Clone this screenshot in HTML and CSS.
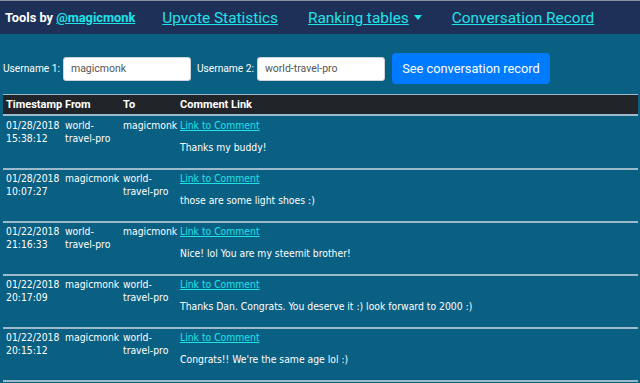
FILE: index.html
```html
<!DOCTYPE html>
<html lang="en">
<head>
  <meta charset="UTF-8">
  <meta name="viewport" content="width=device-width, initial-scale=1.0">
  <title>Conversation Record</title>
  <link rel="stylesheet" href="styles.css">
</head>
<body>
  <nav class="navbar">
    <span class="brand">Tools by <a href="#">@magicmonk</a></span>
    <a class="nav-link" href="#">Upvote Statistics</a>
    <a class="nav-link dropdown-toggle" href="#">Ranking tables</a>
    <a class="nav-link" href="#">Conversation Record</a>
  </nav>

  <form class="controls">
    <label for="user1">Username 1:</label>
    <input type="text" id="user1" value="magicmonk">
    <label for="user2">Username 2:</label>
    <input type="text" id="user2" value="world-travel-pro">
    <button type="button">See conversation record</button>
  </form>

  <div class="table-wrap">
    <table>
      <colgroup>
        <col class="col-time">
        <col class="col-from">
        <col class="col-to">
        <col>
      </colgroup>
      <thead>
        <tr>
          <th>Timestamp</th>
          <th>From</th>
          <th>To</th>
          <th>Comment Link</th>
        </tr>
      </thead>
      <tbody>
        <tr>
          <td>01/28/2018 15:38:12</td>
          <td>world-travel-pro</td>
          <td>magicmonk</td>
          <td><a href="#">Link to Comment</a><p>Thanks my buddy!</p></td>
        </tr>
        <tr>
          <td>01/28/2018 10:07:27</td>
          <td>magicmonk</td>
          <td>world-travel-pro</td>
          <td><a href="#">Link to Comment</a><p>those are some light shoes :)</p></td>
        </tr>
        <tr>
          <td>01/22/2018 21:16:33</td>
          <td>world-travel-pro</td>
          <td>magicmonk</td>
          <td><a href="#">Link to Comment</a><p>Nice! lol You are my steemit brother!</p></td>
        </tr>
        <tr>
          <td>01/22/2018 20:17:09</td>
          <td>magicmonk</td>
          <td>world-travel-pro</td>
          <td><a href="#">Link to Comment</a><p>Thanks Dan. Congrats. You deserve it :) look forward to 2000 :)</p></td>
        </tr>
        <tr>
          <td>01/22/2018 20:15:12</td>
          <td>magicmonk</td>
          <td>world-travel-pro</td>
          <td><a href="#">Link to Comment</a><p>Congrats!! We're the same age lol :)</p></td>
        </tr>
      </tbody>
    </table>
  </div>
</body>
</html>
```

FILE: styles.css
```css
body {
  margin: 0;
  padding: 0;
  background-color: #0a6083;
  color: #fff;
  font-family: Roboto, "Noto Sans", sans-serif;
}
a {
  color: #1fe3e8;
}

/* Navbar */
.navbar {
  display: flex;
  align-items: center;
  height: 33px;
  border-top: 1px solid #8a8f99;
  background-color: #1d3158;
  padding-left: 5px;
  white-space: nowrap;
}
.brand {
  font-size: 12.8px;
  font-weight: bold;
  margin-right: 12px;
}
.nav-link {
  font-size: 15.4px;
  padding: 0 15px;
}
.dropdown-toggle::after {
  content: "";
  display: inline-block;
  margin-left: 5px;
  vertical-align: 3px;
  border-top: 5px solid #1fe3e8;
  border-left: 4px solid transparent;
  border-right: 4px solid transparent;
}

/* Form */
.controls {
  display: flex;
  align-items: center;
  padding: 19px 3px 10px;
  font-size: 10.2px;
  white-space: nowrap;
}
.controls label {
  margin-right: 3px;
}
.controls input {
  width: 128px;
  height: 24px;
  box-sizing: border-box;
  border: 1px solid #ced4da;
  border-radius: 3px;
  padding: 0 7px;
  margin-right: 6px;
  font-family: inherit;
  font-size: 10.5px;
  color: #555;
}
.controls button {
  width: 158px;
  height: 31px;
  margin-left: 1px;
  padding: 0;
  border: none;
  border-radius: 4px;
  background-color: #007bff;
  color: #fff;
  font-family: inherit;
  font-size: 12.8px;
}

/* Table */
.table-wrap {
  padding: 0 2px 0 3px;
}
table {
  width: 100%;
  border-collapse: collapse;
  table-layout: fixed;
}
.col-time {
  width: 59px;
}
.col-from {
  width: 58px;
}
.col-to {
  width: 57px;
}
th {
  height: 19px;
  padding: 0 3px;
  background-color: #212529;
  border-top: 1px solid #9bbacb;
  border-bottom: 2px solid #9bbacb;
  text-align: left;
  font-size: 11px;
  line-height: 19px;
  white-space: nowrap;
}
td {
  vertical-align: top;
  padding: 2px 0 0 3px;
  border-bottom: 2px solid #9bbacb;
  font-family: "DejaVu Sans Condensed", "DejaVu Sans", sans-serif;
  font-size: 10.3px;
  line-height: 13px;
}
tbody tr:first-child td {
  padding-top: 3px;
}
td p {
  margin: 9px 0 14px;
}
```
